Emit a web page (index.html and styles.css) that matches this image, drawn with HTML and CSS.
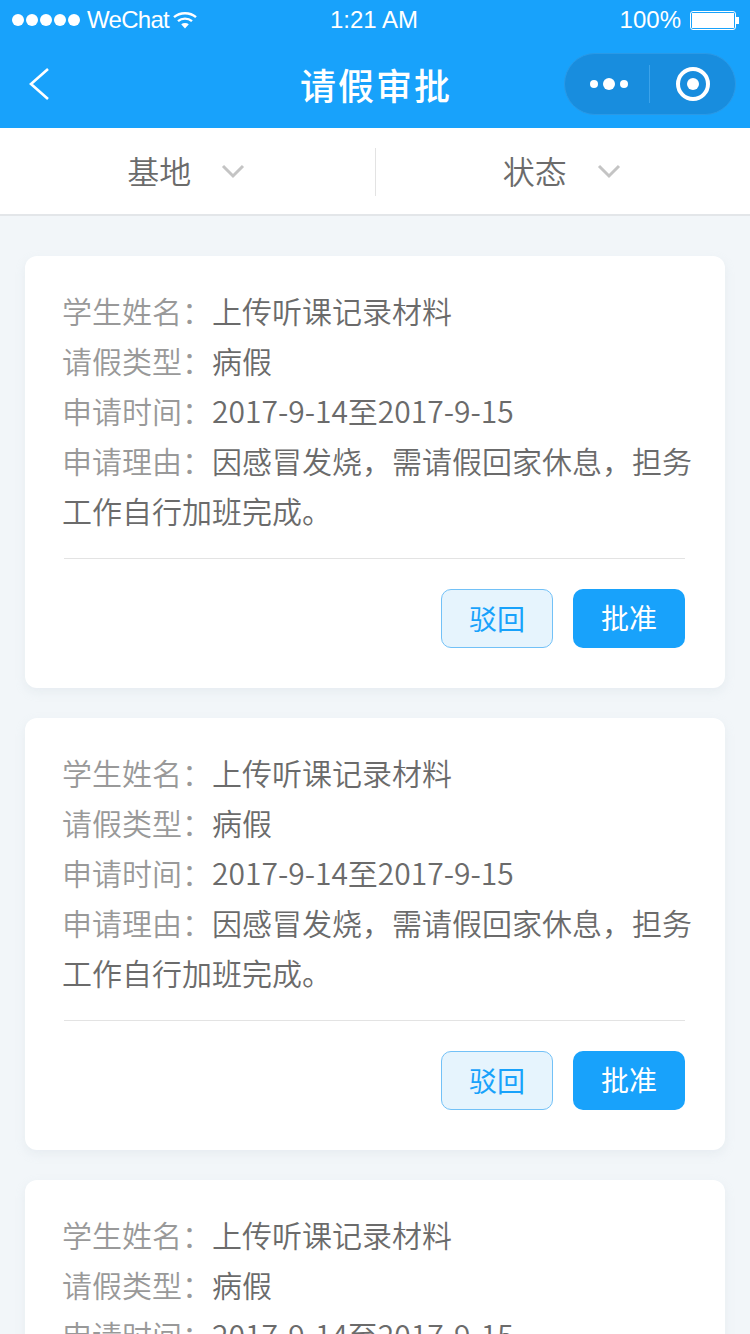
FILE: index.html
```html
<!DOCTYPE html>
<html>
<head>
	<meta charset="utf-8">
	<title>请假审批</title>
	<link rel="stylesheet" href="styles.css">
</head>
<body>
<div class="page">
	<div class="status">
		<div class="status-left">
			<span class="dots"><i></i><i></i><i></i><i></i><i></i></span>
			<span class="carrier">WeChat</span>
			<svg class="wifi" width="24" height="18" viewBox="0 0 24 18"><path d="M1 6.200C7 .9 17 .9 23 6.200" fill="none" stroke="#fff" stroke-width="2.400"/><path d="M5 10.200c4-3.400 10-3.400 14 0" fill="none" stroke="#fff" stroke-width="2.400"/><path d="M8.200 13.200c2.200-1.700 5.400-1.700 7.600 0L12 17.400z" fill="#fff"/></svg>
		</div>
		<div class="status-time">1:21 AM</div>
		<div class="status-right">
			<span>100%</span>
			<span class="battery"><b></b></span>
			<span class="battery-tip"></span>
		</div>
	</div>
	<div class="nav">
		<svg class="back" width="22" height="34" viewBox="0 0 22 34"><path d="M19 2L2 17l17 15" fill="none" stroke="#fff" stroke-width="2.600"/></svg>
		<div class="nav-title">请假审批</div>
		<div class="capsule">
			<div class="capsule-more"><i></i><i class="big"></i><i></i></div>
			<div class="capsule-line"></div>
			<div class="capsule-close"><span></span></div>
		</div>
	</div>
	<div class="filter">
		<div class="filter-item"><span>基地</span><svg width="24" height="15" viewBox="0 0 24 15"><path d="M2 2l10 10L22 2" fill="none" stroke="#c4c4c4" stroke-width="3"/></svg></div>
		<div class="filter-line"></div>
		<div class="filter-item"><span>状态</span><svg width="24" height="15" viewBox="0 0 24 15"><path d="M2 2l10 10L22 2" fill="none" stroke="#c4c4c4" stroke-width="3"/></svg></div>
	</div>
	<div class="list">
		<div class="card">
			<p><span class="label">学生姓名：</span>上传听课记录材料</p>
			<p><span class="label">请假类型：</span>病假</p>
			<p><span class="label">申请时间：</span>2017-9-14至2017-9-15</p>
			<p><span class="label">申请理由：</span>因感冒发烧，需请假回家休息，担务工作自行加班完成。</p>
			<div class="actions">
				<div class="btn btn-reject">驳回</div>
				<div class="btn btn-ok">批准</div>
			</div>
		</div>
		<div class="card">
			<p><span class="label">学生姓名：</span>上传听课记录材料</p>
			<p><span class="label">请假类型：</span>病假</p>
			<p><span class="label">申请时间：</span>2017-9-14至2017-9-15</p>
			<p><span class="label">申请理由：</span>因感冒发烧，需请假回家休息，担务工作自行加班完成。</p>
			<div class="actions">
				<div class="btn btn-reject">驳回</div>
				<div class="btn btn-ok">批准</div>
			</div>
		</div>
		<div class="card">
			<p><span class="label">学生姓名：</span>上传听课记录材料</p>
			<p><span class="label">请假类型：</span>病假</p>
			<p><span class="label">申请时间：</span>2017-9-14至2017-9-15</p>
			<p><span class="label">申请理由：</span>因感冒发烧，需请假回家休息，担务工作自行加班完成。</p>
			<div class="actions">
				<div class="btn btn-reject">驳回</div>
				<div class="btn btn-ok">批准</div>
			</div>
		</div>
	</div>
</div>
</body>
</html>
```
FILE: styles.css
```css
*{
	box-sizing: border-box;
}
body{
	margin: 0;
	font-family: "Noto Sans CJK SC",sans-serif;
}
.page{
	width: 750px;
	height: 1334px;
	overflow: hidden;
	background: #f2f6f9;
}
.status{
	height: 40px;
	padding: 0 11px 0 12px;
	display: flex;
	align-items: center;
	justify-content: space-between;
	background: #18a2fb;
	color: #fff;
	font-family: "Liberation Sans",sans-serif;
	font-size: 24px;
}
.status-left,.status-right{
	width: 280px;
	display: flex;
	align-items: center;
}
.status-right{
	justify-content: flex-end;
}
.status-time{
	margin-right: 3px;
}
.dots{
	display: flex;
	gap: 2px;
	margin-right: 7px;
}
.dots i{
	width: 12px;
	height: 12px;
	border-radius: 50%;
	background: #fff;
}
.carrier{
	letter-spacing: -.7px;
}
.wifi{
	margin-left: 4px;
}
.battery{
	width: 46px;
	height: 19px;
	margin-left: 9px;
	padding: 1px;
	border: 1px solid #fff;
	border-radius: 3px;
}
.battery b{
	display: block;
	height: 100%;
	background: #fff;
}
.battery-tip{
	width: 3px;
	height: 7px;
	background: #fff;
}
.nav{
	height: 88px;
	padding: 0 14px;
	display: grid;
	grid-template-columns: 1fr auto 1fr;
	align-items: center;
	background: #18a2fb;
}
.back{
	margin: -1px 0 0 15px;
}
.nav-title{
	color: #fff;
	font-size: 36px;
	font-weight: 500;
	letter-spacing: 2px;
	margin-right: -2px;
}
.capsule{
	justify-self: end;
	width: 172px;
	height: 62px;
	display: flex;
	align-items: center;
	background: #188dde;
	border: 1px solid #2a99e6;
	border-radius: 31px;
}
.capsule-more{
	width: 84px;
	padding-left: 3px;
	display: flex;
	align-items: center;
	justify-content: center;
	gap: 5px;
}
.capsule-more i{
	width: 8px;
	height: 8px;
	border-radius: 50%;
	background: #fff;
}
.capsule-more i.big{
	width: 12px;
	height: 12px;
}
.capsule-line{
	width: 1px;
	height: 38px;
	background: #3ba3ea;
}
.capsule-close{
	flex: 1;
	display: flex;
	justify-content: center;
}
.capsule-close span{
	width: 34px;
	height: 34px;
	border: 4px solid #fff;
	border-radius: 50%;
	display: flex;
	align-items: center;
	justify-content: center;
}
.capsule-close span:after{
	content: "";
	width: 12px;
	height: 12px;
	border-radius: 50%;
	background: #fff;
}
.filter{
	height: 88px;
	display: flex;
	align-items: center;
	background: #fff;
	border-bottom: 2px solid #e3e6e9;
}
.filter-item{
	flex: 1;
	display: flex;
	align-items: center;
	justify-content: center;
	gap: 30px;
	color: #6b6b6b;
	font-size: 32px;
	font-weight: 350;
}
.filter-item span{
	margin-bottom: 2px;
}
.filter-item svg{
	margin-right: 2px;
}
.filter-line{
	width: 1px;
	height: 48px;
	margin-top: 2px;
	background: #e3e3e3;
}
.list{
	padding: 40px 25px 0;
	display: flex;
	flex-direction: column;
	gap: 30px;
}
.card{
	flex: none;
	padding: 29px 25px 40px 37px;
	background: #fff;
	border-radius: 12px;
	box-shadow: 0 4px 10px rgba(200,210,220,.25);
	color: #6b6b6b;
	font-size: 30px;
	font-weight: 350;
	line-height: 50px;
}
.card p{
	margin: 0;
}
.label{
	color: #999;
}
.actions{
	margin: 23px 15px 0 2px;
	padding-top: 30px;
	display: flex;
	justify-content: flex-end;
	gap: 20px;
	border-top: 1px solid #e3e3e3;
}
.btn{
	width: 112px;
	height: 59px;
	border-radius: 10px;
	text-align: center;
	font-size: 28px;
	font-weight: 400;
	line-height: 56px;
}
.btn-reject{
	background: #e6f4fd;
	border: 1px solid #72c1f7;
	color: #18a2fb;
}
.btn-ok{
	background: #18a2fb;
	color: #fff;
}
```
